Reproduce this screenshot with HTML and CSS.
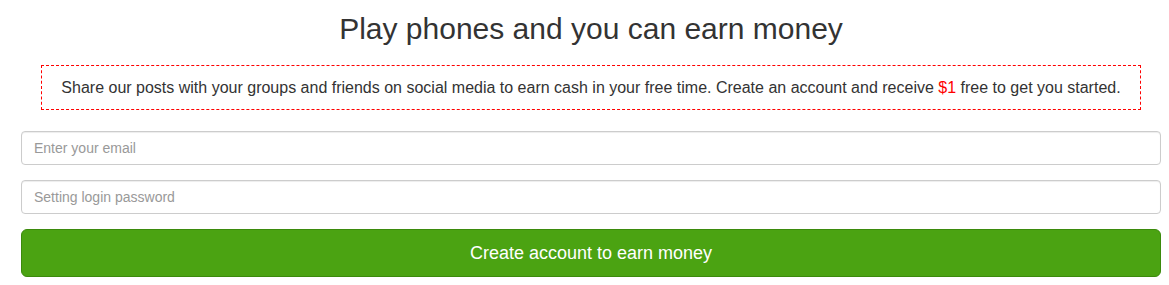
FILE: index.html
```html
<!DOCTYPE html>
<html>
<head>
<meta charset="utf-8">
<link rel="stylesheet" href="styles.css">
</head>
<body>
<div class="page">
  <h1 class="title">Play phones and you can earn money</h1>
  <div class="notice">Share our posts with your groups and friends on social media to earn cash in your free time. Create an account and receive <span class="money">$1</span> free to get you started.</div>
  <form class="form">
    <input class="field" type="email" placeholder="Enter your email">
    <input class="field" type="password" placeholder="Setting login password">
    <button class="submit" type="button">Create account to earn money</button>
  </form>
</div>
</body>
</html>
```

FILE: styles.css
```css
html, body {
  margin: 0;
  padding: 0;
  background: #fff;
}
body {
  font-family: "Liberation Sans", Arial, sans-serif;
  color: #333;
}
.page {
  padding: 0 8px 0 21px;
}
.title {
  margin: 0;
  padding-top: 11px;
  font-size: 30px;
  font-weight: 400;
  line-height: 36px;
  text-align: center;
  color: #333;
}
.notice {
  margin: 18px 20px 0 20px;
  height: 45px;
  box-sizing: border-box;
  border: 1px dashed #f00;
  font-size: 16px;
  line-height: 43px;
  text-align: center;
  color: #333;
}
.money {
  color: #f00;
}
.form {
  display: flex;
  flex-direction: column;
  gap: 15px;
  margin-top: 21px;
}
.field {
  display: block;
  box-sizing: border-box;
  width: 100%;
  height: 34px;
  margin: 0;
  padding: 6px 12px;
  border: 1px solid #ccc;
  border-radius: 4px;
  font-family: "Liberation Sans", Arial, sans-serif;
  font-size: 14px;
  color: #555;
  box-shadow: inset 0 1px 1px rgba(0,0,0,.075);
  outline: none;
}
.field::placeholder {
  color: #999;
}
.submit {
  display: block;
  box-sizing: border-box;
  width: 100%;
  height: 48px;
  margin: 0;
  border: 1px solid #3b8a0c;
  border-radius: 6px;
  background: #4ba312;
  color: #fff;
  font-family: "Liberation Sans", Arial, sans-serif;
  font-size: 18px;
  cursor: pointer;
}
```
